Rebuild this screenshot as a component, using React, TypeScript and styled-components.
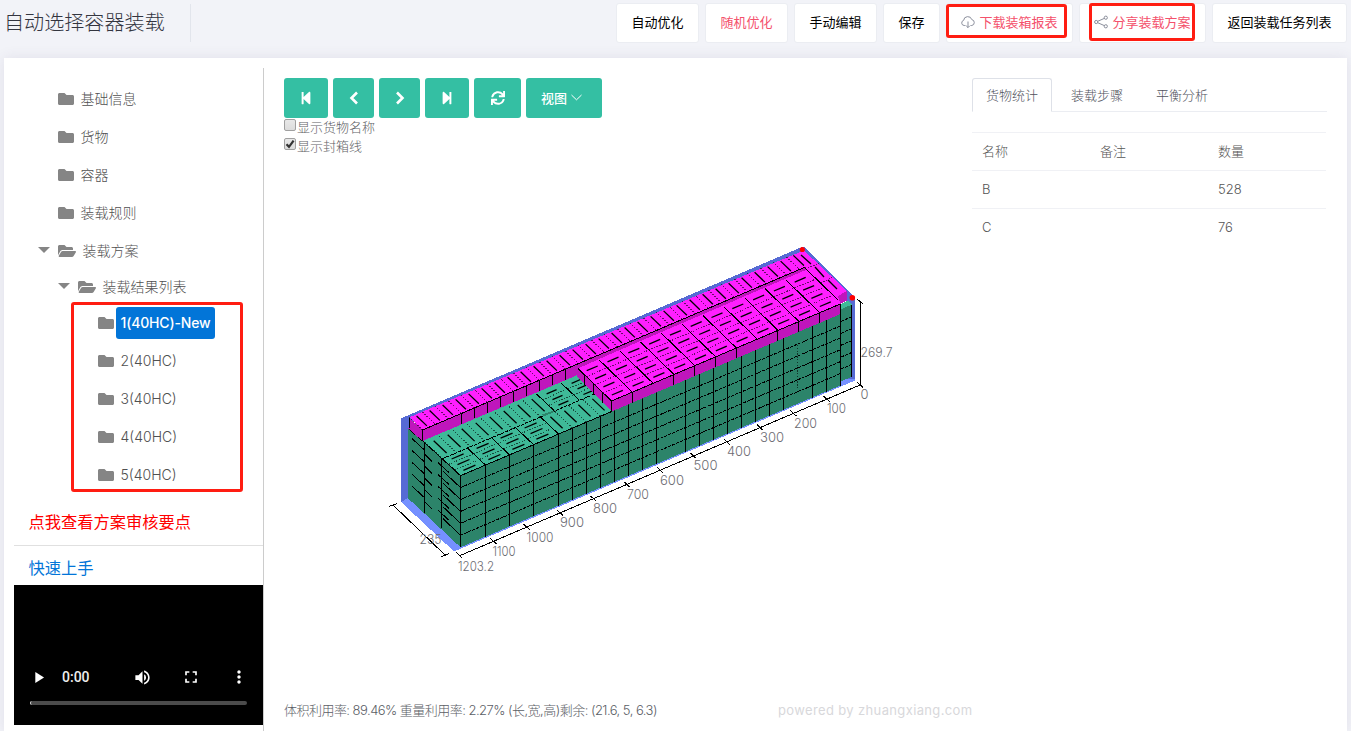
import React from 'react';
import styled, { createGlobalStyle, css } from 'styled-components';
import { FaFolder, FaFolderOpen, FaStepBackward, FaStepForward, FaSync } from 'react-icons/fa';
import { MdPlayArrow, MdVolumeUp, MdFullscreen, MdMoreVert } from 'react-icons/md';

const Global = createGlobalStyle`
  * { box-sizing: border-box; }
  html, body { margin: 0; padding: 0; }
  body {
    background: #f2f3f8;
    font-family: Inter, "Noto Sans CJK SC", sans-serif;
    font-size: 13px;
    font-weight: 300;
    color: #646c7a;
    overflow: hidden;
  }
`;

const Page = styled.div`
  position: relative;
  height: 731px;
  padding: 0 4px;
  display: flex;
  flex-direction: column;
  overflow: hidden;
`;

const TopBar = styled.header`
  flex: none;
  height: 58px;
  display: flex;
  justify-content: space-between;
  align-items: flex-start;
`;

const Title = styled.h1`
  margin: 4px 0 0;
  width: 187px;
  height: 38px;
  border-right: 1px solid #e2e5ec;
  font-size: 20.1px;
  line-height: 39px;
  font-weight: 300;
  color: #33353f;
`;

const Actions = styled.div`
  display: flex;
  gap: 6px;
  padding-top: 3px;
`;

const ActionButton = styled.button<{ $danger?: boolean }>`
  height: 40px;
  padding: 0 14.5px 2px;
  display: flex;
  align-items: center;
  gap: 4px;
  border: 1px solid #ebedf2;
  border-radius: 3px;
  background: #fff;
  font-family: inherit;
  font-size: 13px;
  font-weight: 400;
  line-height: 20px;
  white-space: nowrap;
  color: ${(p) => (p.$danger ? '#f4516c' : '#000')};
  svg { width: 14px; height: 14px; color: #8b8f9c; }
`;

const Panel = styled.main`
  flex: 1;
  min-height: 0;
  display: flex;
  padding: 10px 20px 0 10px;
  background: #fff;
  box-shadow: 0 0 13px rgba(82, 63, 105, 0.1);
`;

const Sidebar = styled.aside`
  flex: none;
  width: 250px;
  border-right: 1px solid #ccc;
  padding-top: 12px;
  display: flex;
  flex-direction: column;
`;

const TreeRow = styled.div<{ $level: number; $short?: boolean }>`
  height: ${(p) => (p.$short ? 34 : 38)}px;
  padding-left: ${(p) => 24 + p.$level * 20}px;
  display: flex;
  align-items: center;
  font-size: 14px;
  color: #505050;
`;

const Caret = styled.span<{ $open?: boolean }>`
  width: 12px;
  margin-right: 8px;
  margin-top: -3px;
  border: 6px solid transparent;
  border-bottom: 0;
  border-top-color: ${(p) => (p.$open ? '#858585' : 'transparent')};
`;

const FolderIcon = styled.span<{ $open?: boolean }>`
  display: flex;
  width: ${(p) => (p.$open ? 18 : 16)}px;
  justify-content: center;
  color: #858585;
  svg { width: ${(p) => (p.$open ? 18 : 16)}px; height: 16px; }
`;

const NodeLabel = styled.span<{ $selected?: boolean }>`
  margin-left: 2px;
  padding: 0 4.5px;
  height: 32px;
  line-height: 31px;
  border-radius: 3px;
  white-space: nowrap;
  ${(p) => p.$selected && css`
    background: #0275d8;
    color: #fff;
    font-weight: 500;
    width: 99px;
    letter-spacing: -0.15px;
  `}
`;

const ReviewLink = styled.a`
  margin: 8px 0 0 14.5px;
  height: 42px;
  line-height: 41px;
  font-size: 16.25px;
  font-weight: 400;
  color: #f00;
`;

const GuideLink = styled.a`
  border-top: 1px solid #e0e0e0;
  padding-left: 14.5px;
  margin-top: 1px;
  height: 40px;
  line-height: 44px;
  font-size: 16.25px;
  font-weight: 400;
  color: #0275d8;
`;

const Player = styled.div`
  height: 140px;
  background: #000;
  color: #fff;
  padding: 78px 16px 0;
`;

const PlayerControls = styled.div`
  display: flex;
  align-items: center;
  height: 28px;
  margin-left: -1px;
  margin-right: -8px;
  svg { flex: none; }
`;

const PlayTime = styled.span`
  width: 71px;
  flex: none;
  margin-left: 14px;
  margin-top: -1px;
  font-family: Roboto, sans-serif;
  font-size: 14px;
  font-weight: 500;
  color: #eee;
`;

const PlayerSlot = styled.span`
  width: 48px;
  flex: none;
  display: flex;
`;

const Progress = styled.div`
  margin-top: 10px;
  height: 4px;
  border-radius: 2px;
  border-left: 1px solid #ddd;
  background: #4b4b4b;
`;

const Work = styled.section`
  flex: none;
  width: 708px;
  padding: 10px 0 0 20px;
  display: flex;
  flex-direction: column;
`;

const Toolbar = styled.div`
  display: flex;
  gap: 5px;
  height: 40px;
`;

const ToolButton = styled.button<{ $w: number; $menu?: boolean }>`
  width: ${(p) => p.$w}px;
  height: 40px;
  padding: ${(p) => (p.$menu ? '0 5px 2px 0' : '0')};
  border: 0;
  border-radius: 3px;
  background: #34bfa3;
  color: #fff;
  display: flex;
  align-items: center;
  justify-content: center;
  gap: 4px;
  font-family: inherit;
  font-size: 13px;
  font-weight: 500;
`;

const Option = styled.label`
  height: 19px;
  display: flex;
  align-items: flex-start;
  line-height: 19px;
  font-weight: 300;
  color: #5f5f66;
`;

const CheckBox = styled.span`
  width: 12px;
  height: 12px;
  margin: 1px 1px 0 0;
  border: 1px solid #a0a0a0;
  border-radius: 2px;
  background: linear-gradient(#e8e8e8, #dcdcdc);
  display: flex;
  svg { width: 10px; height: 10px; }
`;

const Scene = styled.svg`
  display: block;
  width: 688px;
  height: 544px;
  text { font-family: Inter, sans-serif; font-size: 13px; font-weight: 300; fill: #6c6c72; }
`;

const StatusLine = styled.div`
  display: flex;
  height: 21px;
  line-height: 21px;
  white-space: nowrap;
`;

const Stats = styled.span`
  flex: none;
  width: 494px;
  letter-spacing: -0.53px;
  color: #5b5e66;
`;

const Watermark = styled.span`
  flex: none;
  letter-spacing: 0.36px;
  color: #d8d8db;
  font-weight: 400;
`;

const Side = styled.section`
  flex: none;
  width: 355px;
  padding-top: 10px;
`;

const Tabs = styled.nav`
  display: flex;
  gap: 5px;
  height: 34px;
  border-bottom: 1px solid #ebedf2;
`;

const Tab = styled.a<{ $active?: boolean }>`
  width: 80px;
  height: 34px;
  padding-left: 13px;
  border: 1px solid transparent;
  line-height: 32px;
  border-radius: 3px 3px 0 0;
  color: #50525c;
  ${(p) => p.$active && css`
    border-color: #dee1e8;
    border-bottom-color: #fff;
    background: #fff;
  `}
`;

const Table = styled.div`
  margin-top: 20px;
  width: 354px;
`;

const TableRow = styled.div`
  display: grid;
  grid-template-columns: 118px 118px 1fr;
  height: 38px;
  line-height: 37px;
  border-top: 1px solid #f0f1f5;
  color: #555;
  span { padding-left: 10px; }
`;

const Highlight = styled.div<{ $x: number; $y: number; $w: number; $h: number }>`
  position: absolute;
  left: ${(p) => p.$x}px;
  top: ${(p) => p.$y}px;
  width: ${(p) => p.$w}px;
  height: ${(p) => p.$h}px;
  border: 3px solid #ff1d12;
  border-radius: 3px;
`;

type Pt = [number, number];
const pts = (list: Pt[]) => list.map((p) => p.join(',')).join(' ');
const K = 0.4256;

/** Point reached from an origin by moving u along the container and d backwards. */
const at = (o: Pt, u: number, d: number, back: Pt): Pt => [o[0] + u + back[0] * d, o[1] - K * u + back[1] * d];

const seg = (a: Pt, b: Pt) => `M${a[0].toFixed(1)} ${a[1].toFixed(1)}L${b[0].toFixed(1)} ${b[1].toFixed(1)}`;

function buildScene() {
  const solid: string[] = [];
  const dotted: string[] = [];
  const faint: string[] = [];
  const marks: string[] = [];

  // front wall of green boxes
  const front: Pt = [460.5, 475.7];
  const columns = [485.5, 509.5, 533.5, 558.5, 572.5, 586.5, 600.5, 614.5, 628.5, 642.5, 656.5, 685.5, 699.5, 713.5, 727.5, 741.5, 755.5, 769.5, 783.5, 812.5, 826.5, 840.5];
  [460.5, ...columns].forEach((x) => {
    const y = front[1] - K * (x - front[0]);
    solid.push(seg([x, y], [x, y + 71.6]));
  });
  faint.push('M797.5 345V390');
  for (let r = 1; r < 6; r++) {
    dotted.push(seg([460.5, 475.7 + r * 11.9], [840.5, 314 + r * 11.9]));
    dotted.push(seg([841, 309.5 + r * 11.9], [851.5, 305 + r * 11.9]));
  }

  // left wall
  solid.push('M424.5 443V513M441.5 459V528');
  for (let r = 1; r < 6; r++) {
    const y = 475.7 + r * 11.9;
    solid.push(seg([460.5, y], [443, y - 16.5]));
    solid.push(seg([449, y - 15], [438, y - 25]));
    solid.push(seg([432, y - 26], [425, y - 33]));
    solid.push(seg([424, y - 38], [412, y - 49]));
  }
  solid.push(seg([408, 428.3], [424.5, 442.5]), seg([424.5, 442.5], [460.5, 475.7]));

  // green top
  const gb: Pt = [-36, -34];
  [0, 25, 49, 73, 98].forEach((u, i) => {
    solid.push(seg(at(front, u, 0, gb), at(front, u, 0.5, gb)));
    if (i < 4) {
      [0.085, 0.25, 0.415].forEach((d) => marks.push(seg(at(front, u + 6, d, gb), at(front, u + 18, d, gb))));
      [0.167, 0.333].forEach((d) => faint.push(seg(at(front, u, d, gb), at(front, u + 24, d, gb))));
    }
  });
  for (let i = 0; i < 4; i++) {
    const u = 98 + i * 14;
    faint.push(seg(at(front, u, 0, gb), at(front, u, 0.5, gb)));
    marks.push(seg(at(front, u + 7, 0.08, gb), at(front, u + 7, 0.42, gb)));
  }
  for (let i = 0; i < 8; i++) {
    const u = i * 14;
    faint.push(seg(at(front, u, 0.5, gb), at(front, u, 1, gb)));
    marks.push(seg(at(front, u + 7, 0.58, gb), at(front, u + 7, 0.94, gb)));
  }
  [112, 137].forEach((u) => {
    solid.push(seg(at(front, u, 0.5, gb), at(front, u, 1, gb)));
    [0.585, 0.75, 0.915].forEach((d) => marks.push(seg(at(front, u + 7, d, gb), at(front, u + 17, d, gb))));
    [0.667, 0.833].forEach((d) => faint.push(seg(at(front, u, d, gb), at(front, u + 24, d, gb))));
  });
  dotted.push(seg(at(front, 0, 0.5, gb), at(front, 152, 0.5, gb)));
  solid.push(seg(front, [611.7, 411.5]));

  return { solid, dotted, faint, marks };
}

function buildUpper() {
  const solid: string[] = [];
  const faint: string[] = [];
  const marks: string[] = [];

  // rear strip of upright boxes
  const strip: Pt = [422.5, 430];
  const sb: Pt = [-13.2, -12.7];
  for (let i = 0; i < 30; i++) {
    const u = i * 13;
    faint.push(seg(at(strip, u, 0, sb), at(strip, u, 1, sb)));
    marks.push(seg(at(strip, u + 6, 0.12, sb), at(strip, u + 6, 0.9, sb)));
    if (i < 12 && i !== 1 && i !== 2) {
      const p = at(strip, u, 0, sb);
      solid.push(seg(p, [p[0], p[1] + 10.5]));
    }
  }
  solid.push(seg(strip, at(strip, 382, 0, sb)));

  // upper block laid lengthwise
  const block: Pt = [611.5, 401];
  const bb: Pt = [-33.5, -32.5];
  for (let c = 0; c < 11; c++) {
    const u = c * 20.8;
    solid.push(seg(at(block, u, 0, bb), at(block, u, 1, bb)));
    for (let r = 0; r < 4; r++) {
      const d = r / 4 + 0.125;
      marks.push(seg(at(block, u + 4.5, d, bb), at(block, u + 15.5, d, bb)));
      if (r > 0) faint.push(seg(at(block, u, r / 4, bb), at(block, u + 20, r / 4, bb)));
    }
    if (c !== 2 && c !== 7) {
      const p = at(block, u, 0, bb);
      solid.push(seg(p, [p[0], p[1] + 10.5]));
    }
  }
  solid.push(seg(block, [840.3, 304]), 'M840.5 304V314');
  solid.push('M584.5 375V385M593.5 384V394M602.5 392V403');

  // end column
  solid.push('M805 268L838 300');
  marks.push('M801 255L811 264M815 267L824 277M828 280L837 289');
  faint.push('M808 268L819 263M821 283L833 277M793 255L806 268');
  return { solid, faint, marks };
}

const lower = buildScene();
const upper = buildUpper();

const axisLabels: [string, number, number, number][] = [
  ['269.7', 860.5, 357, 32], ['0', 860.5, 399, 8], ['100', 827, 413, 19], ['200', 794, 428, 23],
  ['300', 760, 442, 24], ['400', 727, 456, 24], ['500', 693.5, 470, 24], ['600', 660, 485, 24],
  ['700', 627, 499, 22], ['800', 593, 513, 24], ['900', 560, 527, 24], ['1000', 526.5, 542, 27],
  ['1100', 492.5, 556, 23], ['1203.2', 458, 571, 36], ['235', 419.5, 544, 22],
];

function LoadScene() {
  const ticks: string[] = [];
  for (let i = 0; i <= 11; i++) {
    const x = 860 - i * 33.33;
    const y = 385 + i * 14.22;
    ticks.push(seg([x - 3, y - 3], [x + 3, y + 2.5]));
  }
  ticks.push('M456 552L462 558M389 506.5L397 503.5M441 557L449 553.5M857 299L863 304');
  return (
    <Scene viewBox="284 156 688 544">
      <defs>
        <clipPath id="greenTop">
          <polygon points="408,428 424.5,441.5 576.7,375.7 612,411.5 860,305 860,560 400,560 400,420" />
        </clipPath>
      </defs>
      <g shapeRendering="crispEdges">
        <polygon fill="#566ad4" points="401,418.3 802,247 803,256 412,422 408,498.5 401,502" />
        <polygon fill="#566ad4" points="800,248 804,247 855,297 855,380 846,383 846,300" />
        <polygon fill="#7590ff" points="401,502 408,498 460,546 840,384 840,379 855,378.5 855,380.5 454,551.5" />
        <polygon fill="#2c846a" points="408,428.3 460.5,475.7 460.5,547.3 424.5,513.5 408,498.3" />
        <polygon fill="#2c846a" points="460.5,475.7 840.5,313.8 840.5,385.4 460.5,547.3" />
        <polygon fill="#2c846a" points="840.5,309 851.5,305 851.5,377 840.5,381.5" />
        <polygon fill="#3fb998" points="840.5,304 848.5,300.5 852,304.5 840.5,309.5" />
        <polygon fill="#3fb998" points={pts([[460.5, 475.7], [424.5, 442.5], [421, 439], [575, 371], [577, 375.7], [612, 411]])} />
        <g clipPath="url(#greenTop)" stroke="#000" fill="none" strokeWidth="1">
          <path d={lower.solid.join('')} />
          <path d={lower.dotted.join('')} strokeDasharray="3.26 1" />
          <path d={lower.faint.join('')} strokeDasharray="1.4 1.4" opacity="0.6" />
          <path d={lower.marks.join('')} strokeWidth="1.3" shapeRendering="auto" />
        </g>
        <path d="M851.5 305V377" stroke="#000" />
        <polygon fill="#2c846a" points="541,415 555,410 554,412 545,416" />
        <polygon fill="#bf16bc" points="409,417.5 422.5,430 578,363.8 805,267 812,271 582,372 576.5,375.5 422.5,441 408.5,428.5" />
        <polygon fill="#bf16bc" points="576.5,366 611.5,401 840.5,303.5 840.5,314 611.5,411.5 576.5,376" />
        <polygon fill="#bf16bc" points="835,296 847,291 847,300.5 840.5,304" />
        <polygon fill="#ff1fff" points="409.3,417.3 422.5,430 805,267.5 794,254.5" />
        <polygon fill="#ff1fff" points="578,368.5 611.5,401 840.5,303.7 838,296 807,266" />
        <polygon fill="#bf16bc" points="576,364.5 805,267.2 807,269.5 579,367.5" />
        <polygon fill="#ff1fff" points="793,255 804,250.5 847,291 835,297.5" />
        <g stroke="#000" fill="none">
          <path d={upper.solid.join('')} />
          <path d={upper.faint.join('')} strokeDasharray="1.4 1.4" opacity="0.6" />
          <path d={upper.marks.join('')} strokeWidth="1.3" shapeRendering="auto" />
          <path d="M409 428L409 417.5" />
        </g>
        <g stroke="#000" fill="none">
          <path d="M459 556L860 385M393 505L445 555M860.5 301V385" />
          <path d={ticks.join('')} />
        </g>
      </g>
      <circle cx="802.3" cy="249.5" r="2.6" fill="#f00" />
      <circle cx="852.3" cy="297.8" r="2.8" fill="#f00" />
      {axisLabels.map(([label, x, y, w]) => (
        <text key={label} x={x} y={y} textLength={w} lengthAdjust="spacingAndGlyphs">{label}</text>
      ))}
    </Scene>
  );
}

const CloudDownload = () => (
  <svg viewBox="0 0 14 14" fill="none" stroke="currentColor" strokeWidth="1">
    <path d="M4.5 10.5H3.2A2.6 2.6 0 0 1 2.6 5.4 4.2 4.2 0 0 1 10.8 4.6 3 3 0 0 1 10.8 10.5H9.5M7 6.5V12.5M5.2 10.8 7 12.6 8.8 10.8" />
  </svg>
);

const ShareNodes = () => (
  <svg viewBox="0 0 14 14" fill="none" stroke="currentColor" strokeWidth="1">
    <circle cx="2.2" cy="7" r="1.6" />
    <circle cx="11.8" cy="2.7" r="1.6" />
    <circle cx="11.8" cy="11.3" r="1.6" />
    <path d="M3.7 6.3 10.3 3.4M3.7 7.7 10.3 10.6" />
  </svg>
);

const Chevron = ({ flip }: { flip?: boolean }) => (
  <svg width="10" height="14" viewBox="0 0 10 14" fill="none" stroke="#fff" strokeWidth="2.6">
    <path d={flip ? 'M2 1.5 7.5 7 2 12.5' : 'M8 1.5 2.5 7 8 12.5'} />
  </svg>
);

const tree: { label: string; level: number; open?: boolean; short?: boolean; selected?: boolean }[] = [
  { label: '基础信息', level: 0 },
  { label: '货物', level: 0 },
  { label: '容器', level: 0 },
  { label: '装载规则', level: 0 },
  { label: '装载方案', level: 0, open: true },
  { label: '装载结果列表', level: 1, open: true, short: true },
  { label: '1(40HC)-New', level: 2, selected: true },
  { label: '2(40HC)', level: 2 },
  { label: '3(40HC)', level: 2 },
  { label: '4(40HC)', level: 2 },
  { label: '5(40HC)', level: 2 },
];

const rows = [['名称', '备注', '数量'], ['B', '', '528'], ['C', '', '76']];

export default function App() {
  return (
    <>
      <Global />
      <Page>
        <TopBar>
          <Title>自动选择容器装载</Title>
          <Actions>
            <ActionButton>自动优化</ActionButton>
            <ActionButton $danger>随机优化</ActionButton>
            <ActionButton>手动编辑</ActionButton>
            <ActionButton>保存</ActionButton>
            <ActionButton $danger><CloudDownload />下载装箱报表</ActionButton>
            <ActionButton $danger><ShareNodes />分享装载方案</ActionButton>
            <ActionButton>返回装载任务列表</ActionButton>
          </Actions>
        </TopBar>
        <Panel>
          <Sidebar>
            {tree.map((n) => (
              <TreeRow key={n.label} $level={n.level} $short={n.short}>
                <Caret $open={n.open} />
                <FolderIcon $open={n.open}>{n.open ? <FaFolderOpen /> : <FaFolder />}</FolderIcon>
                <NodeLabel $selected={n.selected}>{n.label}</NodeLabel>
              </TreeRow>
            ))}
            <ReviewLink>点我查看方案审核要点</ReviewLink>
            <GuideLink>快速上手</GuideLink>
            <Player>
              <PlayerControls>
                <MdPlayArrow size={19} />
                <PlayTime>0:00</PlayTime>
                <PlayerSlot><MdVolumeUp size={19} /></PlayerSlot>
                <PlayerSlot><MdFullscreen size={20} /></PlayerSlot>
                <MdMoreVert size={20} />
              </PlayerControls>
              <Progress />
            </Player>
          </Sidebar>
          <Work>
            <Toolbar>
              <ToolButton $w={44}><FaStepBackward size={14} /></ToolButton>
              <ToolButton $w={41}><Chevron /></ToolButton>
              <ToolButton $w={41}><Chevron flip /></ToolButton>
              <ToolButton $w={44}><FaStepForward size={14} /></ToolButton>
              <ToolButton $w={47}><FaSync size={14} /></ToolButton>
              <ToolButton $w={76} $menu>
                视图
                <svg width="11" height="7" viewBox="0 0 11 7" fill="none" stroke="#fff"><path d="M.5 1 5.5 5.8 10.5 1" /></svg>
              </ToolButton>
            </Toolbar>
            <Option><CheckBox />显示货物名称</Option>
            <Option>
              <CheckBox><svg viewBox="0 0 10 10" fill="none" stroke="#333" strokeWidth="2.2"><path d="M1.5 5.2 4 7.8 8.6 1.6" /></svg></CheckBox>
              显示封箱线
            </Option>
            <LoadScene />
            <StatusLine>
              <Stats>体积利用率: 89.46% 重量利用率: 2.27% (长,宽,高)剩余: (21.6, 5, 6.3)</Stats>
              <Watermark>powered by zhuangxiang.com</Watermark>
            </StatusLine>
          </Work>
          <Side>
            <Tabs>
              <Tab $active>货物统计</Tab>
              <Tab>装载步骤</Tab>
              <Tab>平衡分析</Tab>
            </Tabs>
            <Table>
              {rows.map((r) => (
                <TableRow key={r[0]}>{r.map((c, i) => <span key={i}>{c}</span>)}</TableRow>
              ))}
            </Table>
          </Side>
        </Panel>
        <Highlight $x={946} $y={4} $w={121} $h={34} />
        <Highlight $x={1089} $y={3} $w={106} $h={38} />
        <Highlight $x={71} $y={302} $w={172} $h={190} />
      </Page>
    </>
  );
}
